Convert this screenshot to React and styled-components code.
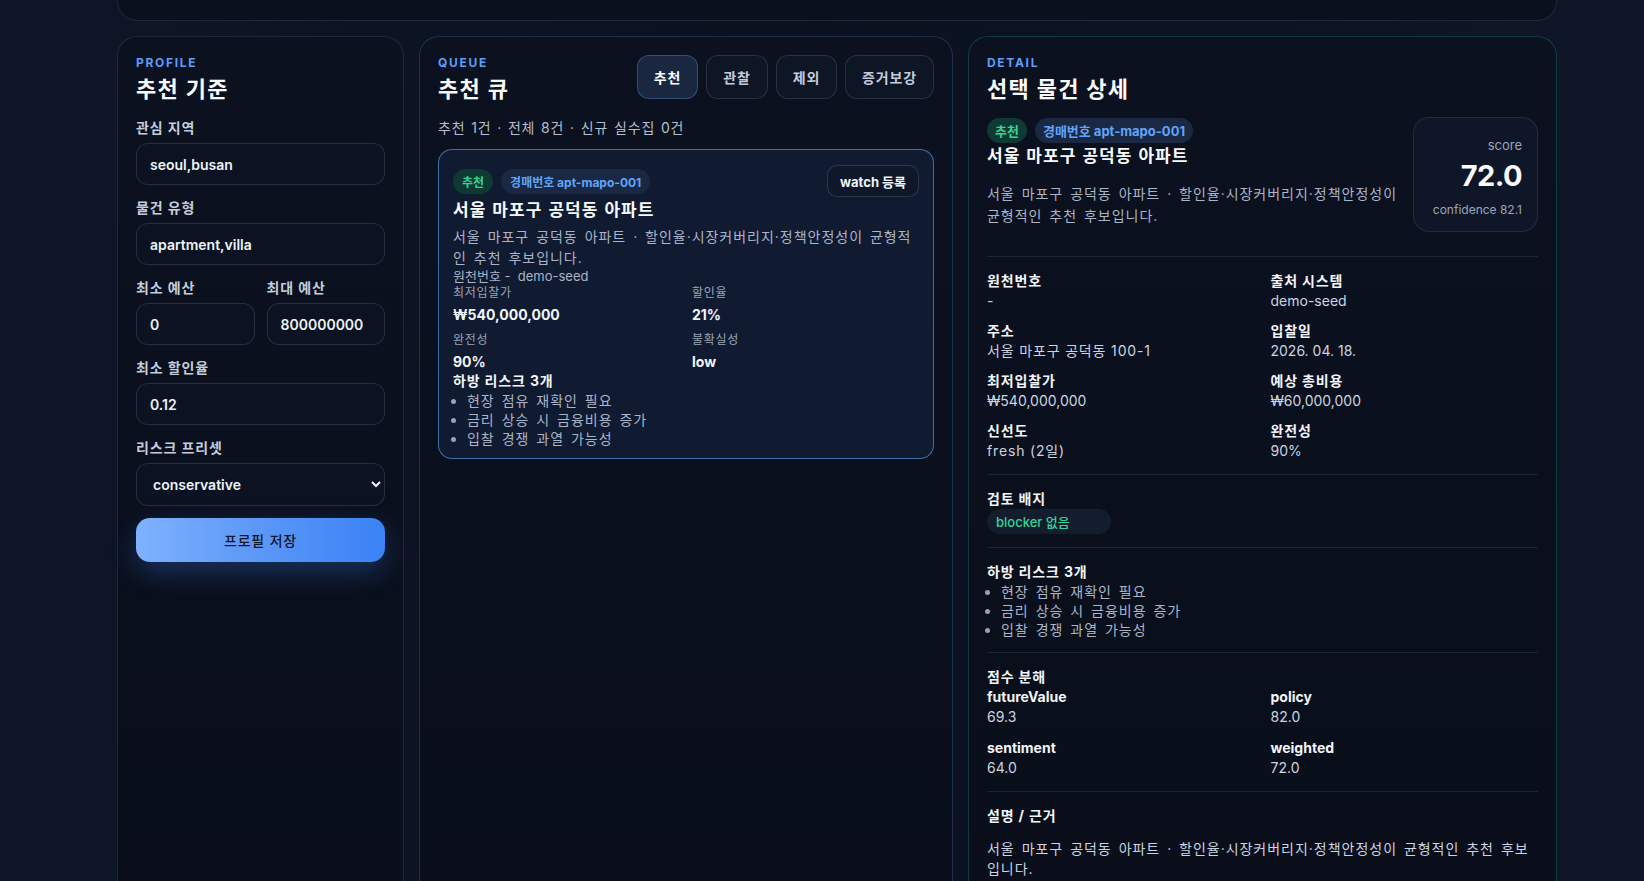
import React from 'react';
import styled, { createGlobalStyle, css } from 'styled-components';

const GlobalStyle = createGlobalStyle`
  * { box-sizing: border-box; }
  body {
    margin: 0;
    background: #0c1424;
    color: #e2e8f0;
    font-family: Inter, "Noto Sans CJK KR", sans-serif;
  }
`;

const tabs = ['추천', '관찰', '제외', '증거보강'];
const risks = ['현장 점유 재확인 필요', '금리 상승 시 금융비용 증가', '입찰 경쟁 과열 가능성'];
const description = '서울 마포구 공덕동 아파트 · 할인율·시장커버리지·정책안정성이 균형적인 추천 후보입니다.';

const cardStats = [
  { label: '최저입찰가', value: '₩540,000,000' },
  { label: '할인율', value: '21%' },
  { label: '완전성', value: '90%' },
  { label: '불확실성', value: 'low' },
];

const detailInfo = [
  { label: '원천번호', value: '-' },
  { label: '출처 시스템', value: 'demo-seed' },
  { label: '주소', value: '서울 마포구 공덕동 100-1' },
  { label: '입찰일', value: '2026. 04. 18.' },
  { label: '최저입찰가', value: '₩540,000,000' },
  { label: '예상 총비용', value: '₩60,000,000' },
  { label: '신선도', value: 'fresh (2일)' },
  { label: '완전성', value: '90%' },
];

const scores = [
  { label: 'futureValue', value: '69.3' },
  { label: 'policy', value: '82.0' },
  { label: 'sentiment', value: '64.0' },
  { label: 'weighted', value: '72.0' },
];

// hangul text gets a little extra tracking, latin text stays as is
const isKorean = (text) => /[가-힣]/.test(text);

const App = () => {
  return (
    <Page>
      <GlobalStyle />
      <Hero />
      <Columns>
        <Panel $tone="gray">
          <Eyebrow>PROFILE</Eyebrow>
          <Title>추천 기준</Title>
          <Form>
            <Field>
              <Label>관심 지역</Label>
              <Input defaultValue="seoul,busan" />
            </Field>
            <Field>
              <Label>물건 유형</Label>
              <Input defaultValue="apartment,villa" />
            </Field>
            <TwoCol>
              <Field>
                <Label>최소 예산</Label>
                <Input defaultValue="0" />
              </Field>
              <Field>
                <Label>최대 예산</Label>
                <Input defaultValue="800000000" />
              </Field>
            </TwoCol>
            <Field>
              <Label>최소 할인율</Label>
              <Input defaultValue="0.12" />
            </Field>
            <Field>
              <Label>리스크 프리셋</Label>
              <Select defaultValue="conservative">
                <option value="conservative">conservative</option>
                <option value="balanced">balanced</option>
                <option value="aggressive">aggressive</option>
              </Select>
            </Field>
            <SaveButton>프로필 저장</SaveButton>
          </Form>
        </Panel>

        <Panel $tone="blue">
          <PanelHead>
            <div>
              <Eyebrow>QUEUE</Eyebrow>
              <Title>추천 큐</Title>
            </div>
            <Tabs>
              {tabs.map((tab, index) => (
                <Tab key={tab} $active={index === 0}>{tab}</Tab>
              ))}
            </Tabs>
          </PanelHead>
          <Summary>추천 1건 · 전체 8건 · 신규 실수집 0건</Summary>
          <QueueCard>
            <CardTop>
              <BadgeRow>
                <Badge $kind="green">추천</Badge>
                <Badge $kind="blue">경매번호 apt-mapo-001</Badge>
              </BadgeRow>
              <WatchButton>watch 등록</WatchButton>
            </CardTop>
            <CardTitle>서울 마포구 공덕동 아파트</CardTitle>
            <CardDesc>{description}</CardDesc>
            <CardMeta>원천번호 -&nbsp; demo-seed</CardMeta>
            <StatGrid>
              {cardStats.map((stat) => (
                <div key={stat.label}>
                  <StatLabel>{stat.label}</StatLabel>
                  <StatValue>{stat.value}</StatValue>
                </div>
              ))}
            </StatGrid>
            <SubHeading>하방 리스크 {risks.length}개</SubHeading>
            <RiskList>
              {risks.map((risk) => <li key={risk}>{risk}</li>)}
            </RiskList>
          </QueueCard>
        </Panel>

        <Panel $tone="teal">
          <Eyebrow>DETAIL</Eyebrow>
          <Title>선택 물건 상세</Title>
          <DetailTop>
            <DetailIntro>
              <BadgeRow>
                <Badge $kind="green" $large>추천</Badge>
                <Badge $kind="blue" $large>경매번호 apt-mapo-001</Badge>
              </BadgeRow>
              <CardTitle>서울 마포구 공덕동 아파트</CardTitle>
              <DetailDesc>{description}</DetailDesc>
            </DetailIntro>
            <ScoreBox>
              <ScoreCaption>score</ScoreCaption>
              <ScoreValue>72.0</ScoreValue>
              <ScoreConfidence>confidence 82.1</ScoreConfidence>
            </ScoreBox>
          </DetailTop>

          <Section $first>
            <InfoGrid>
              {detailInfo.map((item) => (
                <div key={item.label}>
                  <InfoLabel $ko>{item.label}</InfoLabel>
                  <InfoValue $ko={isKorean(item.value)}>{item.value}</InfoValue>
                </div>
              ))}
            </InfoGrid>
          </Section>

          <Section>
            <InfoLabel $ko>검토 배지</InfoLabel>
            <ReviewBadge>blocker 없음</ReviewBadge>
          </Section>

          <Section>
            <SubHeading>하방 리스크 {risks.length}개</SubHeading>
            <RiskList>
              {risks.map((risk) => <li key={risk}>{risk}</li>)}
            </RiskList>
          </Section>

          <Section>
            <InfoLabel $ko>점수 분해</InfoLabel>
            <ScoreGrid>
              {scores.map((item) => (
                <div key={item.label}>
                  <InfoLabel>{item.label}</InfoLabel>
                  <InfoValue>{item.value}</InfoValue>
                </div>
              ))}
            </ScoreGrid>
          </Section>

          <Section>
            <InfoLabel $ko>설명 / 근거</InfoLabel>
            <Reason>{description}</Reason>
          </Section>
        </Panel>
      </Columns>
    </Page>
  );
};

const korean = css`
  letter-spacing: 0.06em;
`;

const prose = css`
  letter-spacing: 0.07em;
  word-spacing: 2px;
`;

const panelBorders = {
  gray: 'rgba(148, 163, 184, 0.16)',
  blue: 'rgba(96, 165, 250, 0.22)',
  teal: 'rgba(45, 212, 191, 0.22)',
};

const Page = styled.div`
  padding: 0 87px 40px 117px;
  min-height: 100vh;
  background:
    linear-gradient(90deg, rgba(15, 23, 42, 0.6) 0%, rgba(5, 9, 18, 0.3) 50%, rgba(15, 23, 42, 0.6) 100%),
    #0c1424;
`;

const Hero = styled.div`
  height: 101px;
  margin-top: -80px;
  border: 1px solid rgba(148, 163, 184, 0.16);
  border-radius: 20px;
  background: #0a101d;
`;

const Columns = styled.div`
  display: grid;
  grid-template-columns: 287px 534px 589px;
  gap: 15px;
  margin-top: 15px;
  align-items: stretch;
`;

const Panel = styled.section`
  padding: 17px 18px 24px;
  border: 1px solid ${({ $tone }) => panelBorders[$tone]};
  border-radius: 20px;
  background: linear-gradient(180deg, #0b111f 0%, #090e1a 100%);
  min-width: 0;
`;

const Eyebrow = styled.div`
  font-size: 12px;
  line-height: 18px;
  font-weight: 700;
  letter-spacing: 0.14em;
  color: #5b9df9;
`;

const Title = styled.h2`
  margin: 2px 0 0;
  font-size: 22px;
  line-height: 30px;
  font-weight: 700;
  color: #f8fafc;
  ${korean}
`;

const Form = styled.div`
  display: flex;
  flex-direction: column;
  gap: 13px;
  margin-top: 14px;
`;

const Field = styled.label`
  display: flex;
  flex-direction: column;
  gap: 5px;
  min-width: 0;
`;

const TwoCol = styled.div`
  display: grid;
  grid-template-columns: 1fr 1fr;
  gap: 12px;
`;

const Label = styled.span`
  font-size: 14px;
  line-height: 20px;
  font-weight: 600;
  color: #c3cddb;
  ${korean}
`;

const Input = styled.input`
  width: 100%;
  height: 42px;
  padding: 0 13px;
  border: 1px solid rgba(148, 163, 184, 0.2);
  border-radius: 12px;
  background: #0b1221;
  color: #eef2f7;
  font-family: inherit;
  font-size: 14px;
  font-weight: 600;
  outline: none;
`;

const Select = styled.select`
  width: 100%;
  height: 43px;
  padding: 0 8px 0 12px;
  border: 1px solid rgba(148, 163, 184, 0.2);
  border-radius: 12px;
  background-color: #0b1221;
  color: #eef2f7;
  color-scheme: dark;
  font-family: inherit;
  font-size: 14px;
  font-weight: 600;
  outline: none;
`;

const SaveButton = styled.button`
  height: 44px;
  margin-top: -1px;
  border: none;
  border-radius: 14px;
  background: linear-gradient(90deg, #7fb2ff 0%, #5b97f7 50%, #3b82f6 100%);
  box-shadow: 0 10px 28px rgba(59, 130, 246, 0.3);
  color: #0f172a;
  font-family: inherit;
  font-size: 14px;
  font-weight: 500;
  cursor: pointer;
  ${korean}
`;

const PanelHead = styled.div`
  display: flex;
  justify-content: space-between;
  align-items: flex-start;
`;

const Tabs = styled.div`
  display: flex;
  gap: 8px;
  margin-top: 1px;
`;

const Tab = styled.button`
  height: 44px;
  padding: 0 16px;
  border-radius: 12px;
  border: 1px solid ${({ $active }) => ($active ? 'rgba(96, 165, 250, 0.32)' : 'rgba(148, 163, 184, 0.2)')};
  background: ${({ $active }) => ($active ? '#1a2740' : '#0e1525')};
  color: ${({ $active }) => ($active ? '#f8fafc' : '#c3cddb')};
  font-family: inherit;
  font-size: 14px;
  font-weight: 700;
  cursor: pointer;
  ${korean}
`;

const Summary = styled.div`
  margin-top: 14px;
  font-size: 14px;
  line-height: 20px;
  color: #b4bfcf;
  word-spacing: 1px;
  ${korean}
`;

const QueueCard = styled.article`
  margin-top: 11px;
  padding: 15px 14px 10px;
  border: 1px solid rgba(96, 165, 250, 0.6);
  border-radius: 14px;
  background: #101a31;
`;

const CardTop = styled.div`
  display: flex;
  justify-content: space-between;
  align-items: center;
  height: 32px;
`;

const BadgeRow = styled.div`
  display: flex;
  align-items: center;
  gap: 8px;
  min-height: 26px;
`;

const badgeColors = {
  green: { bg: '#0f3a34', fg: '#34d399' },
  blue: { bg: '#1b2843', fg: '#60a5fa' },
};

const Badge = styled.span`
  display: inline-flex;
  align-items: center;
  height: 25px;
  padding: 0 ${({ $large }) => ($large ? '8px' : '9px')};
  border-radius: 999px;
  background: ${({ $kind }) => badgeColors[$kind].bg};
  color: ${({ $kind }) => badgeColors[$kind].fg};
  font-size: ${({ $large }) => ($large ? '13px' : '12px')};
  font-weight: 700;
  white-space: nowrap;
`;

const WatchButton = styled.button`
  height: 32px;
  padding: 0 12px;
  border: 1px solid rgba(148, 163, 184, 0.22);
  border-radius: 10px;
  background: #0f182b;
  color: #f1f5f9;
  font-family: inherit;
  font-size: 13px;
  font-weight: 700;
  cursor: pointer;
`;

const CardTitle = styled.h3`
  margin: 2px 0 0;
  font-size: 17px;
  line-height: 22px;
  font-weight: 700;
  color: #f8fafc;
  word-spacing: 1px;
  ${korean}
`;

const CardDesc = styled.p`
  margin: 5px 0 0;
  font-size: 14px;
  line-height: 21px;
  color: #aab5c7;
  ${prose}
`;

const CardMeta = styled.div`
  font-size: 13px;
  line-height: 17px;
  color: #aab5c7;
`;

const StatGrid = styled.div`
  display: grid;
  grid-template-columns: 1fr 1fr;
  column-gap: 12px;
  row-gap: 8px;
`;

const StatLabel = styled.div`
  font-size: 12px;
  line-height: 16px;
  color: #9aa6b8;
  ${korean}
`;

const StatValue = styled.div`
  margin-top: 5px;
  font-size: 14px;
  line-height: 18px;
  font-weight: 700;
  color: #f1f5f9;
`;

const SubHeading = styled.div`
  font-size: 14px;
  line-height: 20px;
  font-weight: 700;
  color: #f1f5f9;
  ${korean}
`;

const RiskList = styled.ul`
  margin: 0;
  padding-left: 14px;
  font-size: 14px;
  line-height: 19px;
  color: #aab5c7;
  ${prose}

  li::marker {
    color: #94a3b8;
  }
`;

const DetailTop = styled.div`
  display: flex;
  align-items: flex-start;
  gap: 16px;
  margin-top: 13px;
`;

const DetailIntro = styled.div`
  flex: 1;
  min-width: 0;
`;

const DetailDesc = styled.p`
  margin: 16px 0 0;
  font-size: 14px;
  line-height: 22px;
  color: #aab5c7;
  ${prose}
`;

const ScoreBox = styled.div`
  flex: 0 0 125px;
  display: flex;
  flex-direction: column;
  align-items: flex-end;
  padding: 18px 15px 13px;
  border: 1px solid rgba(148, 163, 184, 0.16);
  border-radius: 16px;
  background: #0e1628;
`;

const ScoreCaption = styled.div`
  font-size: 13px;
  line-height: 18px;
  color: #9aa6b8;
`;

const ScoreValue = styled.div`
  margin-top: 4px;
  font-size: 29px;
  line-height: 36px;
  font-weight: 700;
  letter-spacing: -0.02em;
  color: #f8fafc;
`;

const ScoreConfidence = styled.div`
  margin-top: 8px;
  font-size: 12px;
  line-height: 16px;
  color: #9aa6b8;
  white-space: nowrap;
`;

const Section = styled.div`
  margin-top: ${({ $first }) => ($first ? '24px' : '0')};
  padding: 14px 0 13px;
  border-top: 1px solid rgba(148, 163, 184, 0.14);
`;

const InfoGrid = styled.div`
  display: grid;
  grid-template-columns: 1fr 1fr;
  column-gap: 16px;
  row-gap: 10px;
`;

const ScoreGrid = styled(InfoGrid)`
  row-gap: 11px;
`;

const InfoLabel = styled.div`
  font-size: 14px;
  line-height: 20px;
  font-weight: 700;
  color: #f1f5f9;
  ${({ $ko }) => $ko && korean}
`;

const InfoValue = styled.div`
  font-size: 14px;
  line-height: 20px;
  color: #cbd5e1;
  ${({ $ko }) => $ko && korean}
`;

const ReviewBadge = styled.span`
  display: inline-flex;
  align-items: center;
  min-width: 124px;
  height: 25px;
  padding: 0 9px;
  border-radius: 999px;
  background: #141d2e;
  color: #34d399;
  font-size: 13px;
  font-weight: 500;
`;

const Reason = styled.p`
  margin: 13px 0 0;
  font-size: 14px;
  line-height: 20px;
  color: #cbd5e1;
  ${prose}
`;

export default App;
